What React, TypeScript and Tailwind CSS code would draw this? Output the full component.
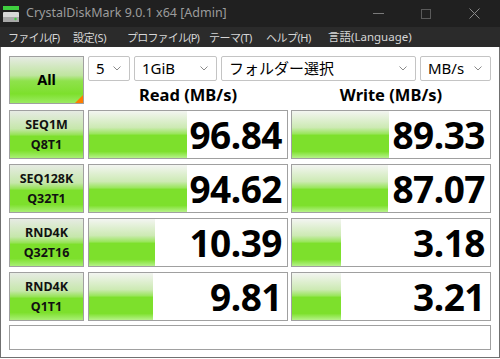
import React from 'react';

const FONT = { fontFamily: '"Noto Sans", "Noto Sans CJK JP", sans-serif' };

// menu items with the width each one takes in the bar
const menus = [
  { t: 'ファイル(F)', w: 'w-[65px] tracking-[-0.7px]' },
  { t: '設定(S)', w: 'w-[54px] tracking-[-0.3px]' },
  { t: 'プロファイル(P)', w: 'w-[82px] tracking-[-0.8px]' },
  { t: 'テーマ(T)', w: 'w-[57px] tracking-[-0.5px]' },
  { t: 'ヘルプ(H)', w: 'w-[62px] tracking-[-0.5px]' },
  { t: '言語(Language)', w: 'w-[100px] text-[11.5px]' },
];

const rows = [
  { l1: 'SEQ1M', l2: 'Q8T1', read: '96.84', rw: 98, write: '89.33', ww: 97 },
  { l1: 'SEQ128K', l2: 'Q32T1', read: '94.62', rw: 98, write: '87.07', ww: 96 },
  { l1: 'RND4K', l2: 'Q32T16', read: '10.39', rw: 66, write: '3.18', ww: 49 },
  { l1: 'RND4K', l2: 'Q1T1', read: '9.81', rw: 64, write: '3.21', ww: 49 },
];

function Chevron() {
  return (
    <svg width="8" height="5" viewBox="0 0 8 5" className="shrink-0">
      <path d="M0.5 0.5 L4 4 L7.5 0.5" fill="none" stroke="#8a8a8a" strokeWidth="1" />
    </svg>
  );
}

function Select({ w, text }: { w: string; text: string }) {
  return (
    <div className={`${w} h-[25px] flex items-center justify-between pl-[7px] pr-[8px] border border-[#c4c4c4] rounded-[2px] bg-white text-[15px] text-black`}>
      <span className="leading-none">{text}</span>
      <Chevron />
    </div>
  );
}

function ResultBox({ value, bar }: { value: string; bar: number }) {
  return (
    <div className="relative w-[200px] h-[49px] border border-[#a0a0a0] bg-white">
      <div
        className="absolute left-0 top-0 bottom-0 bg-[linear-gradient(to_bottom,#f3f5f1_0%,#cdeab4_35%,#9be65f_48%,#7de02c_52%,#7de02c_86%,#b6f28a_100%)]"
        style={{ width: bar }}
      />
      <div className="relative h-full flex items-center justify-end pr-[5px] text-[37px] font-bold text-black leading-none tracking-[-0.5px]">
        {value}
      </div>
    </div>
  );
}

export default function App() {
  return (
    <div className="w-[500px] h-[359px] bg-white overflow-hidden" style={FONT}>
      <div className="w-[500px] h-[358px] flex flex-col border-b border-[#707070]">
        {/* title bar */}
        <div className="h-[27px] bg-[#202020] flex items-center">
          <svg width="16" height="16" viewBox="0 0 16 16" className="ml-[3px]">
            <rect x="0" y="0" width="16" height="4" fill="#3fcf3f" />
            <rect x="0" y="6" width="16" height="10" rx="1" fill="#d8d8d8" />
            <rect x="0" y="11" width="16" height="5" fill="#a8a8a8" />
            <circle cx="12.5" cy="13" r="1.2" fill="#3fcf3f" />
          </svg>
          <span className="ml-[7px] text-[12.5px] text-[#9c9c9c]">CrystalDiskMark 9.0.1 x64 [Admin]</span>
          <div className="ml-auto pr-[2px] flex items-center">
            <div className="w-[48px] h-[27px] flex items-center justify-center">
              <div className="w-[11px] h-px bg-[#7a7a7a]" />
            </div>
            <div className="w-[48px] h-[27px] flex items-center justify-center">
              <div className="w-[10px] h-[10px] border border-[#5a5a5a]" />
            </div>
            <div className="w-[48px] h-[27px] flex items-center justify-center">
              <svg width="11" height="11" viewBox="0 0 11 11">
                <path d="M0.5 0.5 L10.5 10.5 M10.5 0.5 L0.5 10.5" stroke="#8a8a8a" strokeWidth="1" />
              </svg>
            </div>
          </div>
        </div>

        {/* menu bar */}
        <div className="h-[20px] bg-[#2b2b2b] flex items-center pl-[8px] text-[11px] text-[#d6d6d6]">
          {menus.map((m) => (
            <span key={m.t} className={`${m.w} shrink-0 leading-none whitespace-nowrap`}>{m.t}</span>
          ))}
        </div>

        {/* content */}
        <div className="flex-1 bg-white border-l border-r border-[#707070] pl-[8px] pt-[9px]">
          <div className="flex">
            <div className="relative w-[75px] h-[48px] border border-[#a0a0a0] bg-[linear-gradient(to_bottom,#e6ebe3_0%,#bfe59f_40%,#8fe24c_52%,#7de02c_80%,#9beb62_100%)] flex items-center justify-center text-[14.5px] font-bold text-black">
              All
              <div className="absolute right-0 bottom-0 w-0 h-0 border-l-[8px] border-l-transparent border-b-[8px] border-b-[#ff7d00]" />
            </div>
            <div className="ml-[4px] flex flex-col">
              <div className="flex gap-[4px]">
                <Select w="w-[42px]" text="5" />
                <Select w="w-[83px]" text="1GiB" />
                <Select w="w-[195px]" text="フォルダー選択" />
                <Select w="w-[71px]" text="MB/s" />
              </div>
              <div className="flex h-[23px] items-end text-[16.5px] font-bold text-black">
                <div className="w-[200px] text-center leading-none pb-[1px]">Read (MB/s)</div>
                <div className="ml-[3px] w-[200px] text-center leading-none pb-[1px]">Write (MB/s)</div>
              </div>
            </div>
          </div>

          <div className="mt-[6px] flex flex-col gap-[5px]">
            {rows.map((r, i) => (
              <div key={i} className="flex">
                <div className="w-[75px] h-[49px] border border-[#a0a0a0] bg-[linear-gradient(to_bottom,#e6ebe3_0%,#c6e7ab_38%,#98e35a_50%,#7de02c_54%,#7de02c_84%,#a9ef76_100%)] flex flex-col items-center justify-center text-[12.5px] font-bold text-[#111] leading-[20px]">
                  <span>{r.l1}</span>
                  <span>{r.l2}</span>
                </div>
                <div className="ml-[4px]">
                  <ResultBox value={r.read} bar={r.rw} />
                </div>
                <div className="ml-[3px]">
                  <ResultBox value={r.write} bar={r.ww} />
                </div>
              </div>
            ))}
          </div>

          <div className="mt-[4px] w-[482px] h-[25px] border border-[#a0a0a0] bg-white" />
        </div>
      </div>
    </div>
  );
}
